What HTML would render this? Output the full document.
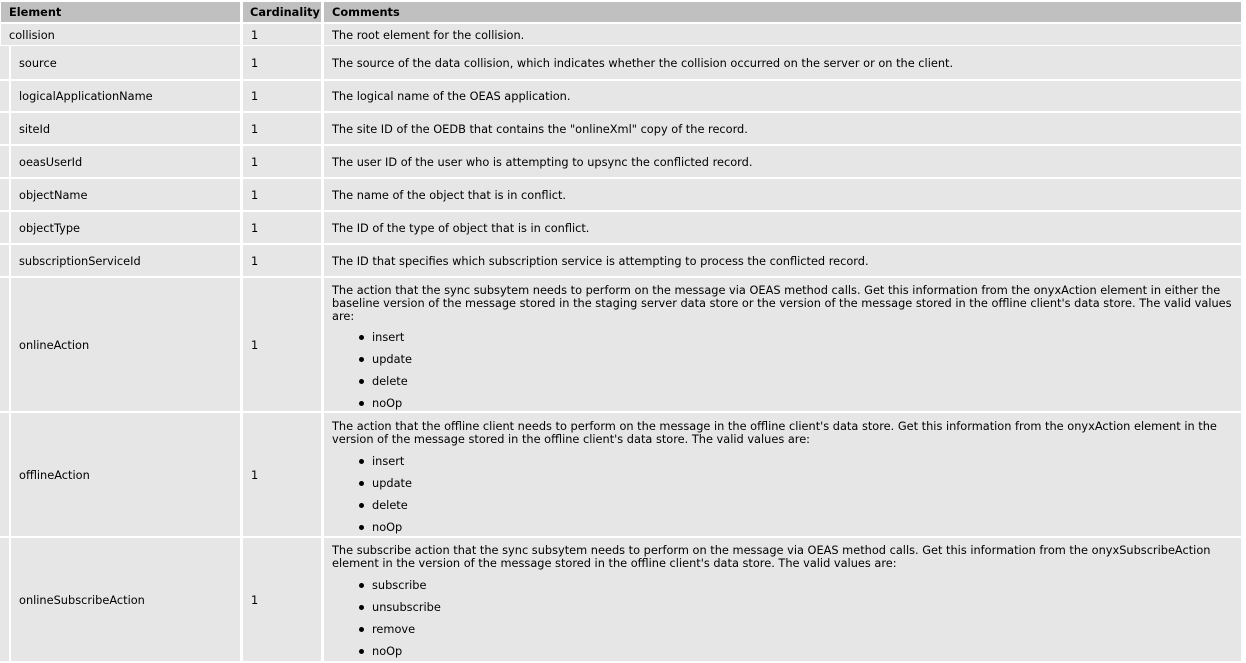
<!DOCTYPE html>
<html><head><meta charset="utf-8"><style>
body{margin:0;background:#fff;width:1246px;height:663px;overflow:hidden;font-family:"DejaVu Sans","Liberation Sans",sans-serif;font-size:11.35px;color:#000}
.c{position:absolute;background:#e6e6e6;box-sizing:border-box;display:flex;align-items:center;padding-left:8px;white-space:nowrap;overflow:hidden}
.h{background:#c0c0c0;font-weight:bold;}
.m{position:absolute;line-height:13px;white-space:nowrap}
ul{margin:0;padding:0;list-style:none}
li{position:relative;height:22px;line-height:22px;padding-left:40px}
li:before{content:"";position:absolute;left:27px;top:9px;width:5px;height:5px;border-radius:50%;background:#000}
</style></head><body>
<div class="c h" style="left:1px;top:2px;width:239px;height:20px">Element</div>
<div class="c h" style="left:243px;top:2px;width:78px;height:20px;padding-left:7px">Cardinality</div>
<div class="c h" style="left:324px;top:2px;width:917px;height:20px">Comments</div>

<div class="c" style="left:1px;top:24px;width:239px;height:21px">collision</div>
<div class="c" style="left:243px;top:24px;width:78px;height:21px">1</div>
<div class="c" style="left:324px;top:24px;width:917px;height:21px">The root element for the collision.</div>

<div id="rows"></div>
<script>
var rows=[
["source",46,79,"The source of the data collision, which indicates whether the collision occurred on the server or on the client."],
["logicalApplicationName",81,111,"The logical name of the OEAS application."],
["siteId",113,144,"The site ID of the OEDB that contains the \"onlineXml\" copy of the record."],
["oeasUserId",146,177,"The user ID of the user who is attempting to upsync the conflicted record."],
["objectName",179,210,"The name of the object that is in conflict."],
["objectType",212,243,"The ID of the type of object that is in conflict."],
["subscriptionServiceId",245,276,"The ID that specifies which subscription service is attempting to process the conflicted record."],
["onlineAction",278,411,null],
["offlineAction",413,536,null],
["onlineSubscribeAction",538,661,null]];
var h="";
rows.forEach(function(r){var t=r[1],ht=r[2]-r[1];
h+='<div class="c" style="left:0;top:'+t+'px;width:9px;height:'+ht+'px;padding:0"></div>';
h+='<div class="c" style="left:11px;top:'+t+'px;width:229px;height:'+ht+'px">'+r[0]+'</div>';
h+='<div class="c" style="left:243px;top:'+t+'px;width:78px;height:'+ht+'px">1</div>';
h+='<div class="c" style="left:324px;top:'+t+'px;width:917px;height:'+ht+'px">'+(r[3]||'')+'</div>';});
document.getElementById("rows").innerHTML=h;
</script>
<div class="m" style="left:332px;top:284px">The action that the sync subsytem needs to perform on the message via OEAS method calls. Get this information from the onyxAction element in either the<br>baseline version of the message stored in the staging server data store or the version of the message stored in the offline client's data store. The valid values<br>are:
<ul style="margin-top:3px"><li>insert</li><li>update</li><li>delete</li><li>noOp</li></ul></div>
<div class="m" style="left:332px;top:420px">The action that the offline client needs to perform on the message in the offline client's data store. Get this information from the onyxAction element in the<br>version of the message stored in the offline client's data store. The valid values are:
<ul style="margin-top:4px"><li>insert</li><li>update</li><li>delete</li><li>noOp</li></ul></div>
<div class="m" style="left:332px;top:544px">The subscribe action that the sync subsytem needs to perform on the message via OEAS method calls. Get this information from the onyxSubscribeAction<br>element in the version of the message stored in the offline client's data store. The valid values are:
<ul style="margin-top:4px"><li>subscribe</li><li>unsubscribe</li><li>remove</li><li>noOp</li></ul></div>
</body></html>
